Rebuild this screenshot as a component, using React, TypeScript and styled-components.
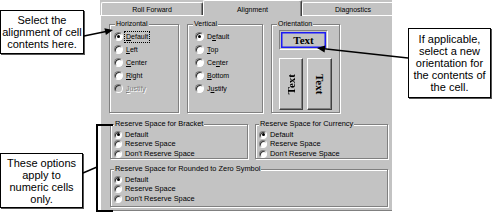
import React, { ReactNode } from 'react';
import styled, { createGlobalStyle } from 'styled-components';

const GlobalStyle = createGlobalStyle`
  html, body {
    margin: 0;
    padding: 0;
    background: #fff;
  }
  body {
    font-family: "Liberation Sans", Arial, sans-serif;
  }
`;

const FACE = '#c3c3c3';

interface I_Option {
    label: ReactNode
    checked?: boolean
    disabled?: boolean
    focus?: boolean
}

const horizontal: I_Option[] = [
    { label: <><u>D</u>efault</>, checked: true, focus: true },
    { label: <><u>L</u>eft</> },
    { label: <><u>C</u>enter</> },
    { label: <><u>R</u>ight</> },
    { label: <><u>J</u>ustify</>, disabled: true },
];

const vertical: I_Option[] = [
    { label: <>D<u>e</u>fault</>, checked: true },
    { label: <><u>T</u>op</> },
    { label: <>Ce<u>n</u>ter</> },
    { label: <><u>B</u>ottom</> },
    { label: <>J<u>u</u>stify</> },
];

const reserve: I_Option[] = [
    { label: 'Default', checked: true },
    { label: 'Reserve Space' },
    { label: 'Don\'t Reserve Space' },
];

const RadioRow = (props: I_Option & { small?: boolean }) => (
    <Option $row={props.small ? 9.5 : 13}>
        <RadioDot $checked={props.checked} $disabled={props.disabled} $size={props.small ? 8 : 9} />
        <OptionText $disabled={props.disabled} $focus={props.focus} $fs={props.small ? 7.4 : 7}>
            {props.label}
        </OptionText>
    </Option>
);

const App: React.FC = () => {
    return (
        <>
            <GlobalStyle />
            <Canvas>
                <Dialog>
                    <TabStrip>
                        <Tab $w={102}>Roll Forward</Tab>
                        <Tab $w={99} $active>Alignment</Tab>
                        <Tab $w={102}>Diagnostics</Tab>
                    </TabStrip>
                    <Body>
                        <TopRow>
                            <Group $w={70} $h={94}>
                                <Legend>Horizontal</Legend>
                                <OptionList $pad={4}>
                                    {horizontal.map((o, i) => <RadioRow key={i} {...o} />)}
                                </OptionList>
                            </Group>
                            <Group $w={76} $h={94}>
                                <Legend>Vertical</Legend>
                                <OptionList $pad={7}>
                                    {vertical.map((o, i) => <RadioRow key={i} {...o} />)}
                                </OptionList>
                            </Group>
                            <Group $w={69} $h={94}>
                                <Legend>Orientation</Legend>
                                <OrientArea>
                                    <OrientButton $w={49} $h={20} $selected>
                                        <HorizText>Text</HorizText>
                                    </OrientButton>
                                    <OrientRow>
                                        <OrientButton $w={24} $h={52}>
                                            <VertText $dir="up">Text</VertText>
                                        </OrientButton>
                                        <OrientButton $w={25} $h={52}>
                                            <VertText $dir="down">Text</VertText>
                                        </OrientButton>
                                    </OrientRow>
                                </OrientArea>
                            </Group>
                        </TopRow>
                        <LowerRow $top={6}>
                            <Group $w={138} $h={40}>
                                <SmallLegend>Reserve Space for Bracket</SmallLegend>
                                <OptionList $pad={3}>
                                    {reserve.map((o, i) => <RadioRow key={i} {...o} small />)}
                                </OptionList>
                            </Group>
                            <Group $w={133} $h={40}>
                                <SmallLegend>Reserve Space for Currency</SmallLegend>
                                <OptionList $pad={3}>
                                    {reserve.map((o, i) => <RadioRow key={i} {...o} small />)}
                                </OptionList>
                            </Group>
                        </LowerRow>
                        <LowerRow $top={5}>
                            <Group $w={278} $h={43}>
                                <SmallLegend>Reserve Space for Rounded to Zero Symbol</SmallLegend>
                                <OptionList $pad={3}>
                                    {reserve.map((o, i) => <RadioRow key={i} {...o} small />)}
                                </OptionList>
                            </Group>
                        </LowerRow>
                    </Body>
                </Dialog>

                <Callout $x={0} $y={10} $w={84} $h={44}>
                    Select the<br />alignment of cell<br />contents here.
                </Callout>
                <Callout $x={408} $y={28} $w={83} $h={70}>
                    If applicable,<br />select a new<br />orientation for<br />the contents of<br />the cell.
                </Callout>
                <Callout $x={0} $y={153} $w={83} $h={55}>
                    These options<br />apply to<br />numeric cells<br />only.
                </Callout>

                <Pointers width="493" height="217" viewBox="0 0 493 217">
                    <line x1="84" y1="36" x2="106" y2="31.5" stroke="#000" strokeWidth="1.6" />
                    <polygon points="113,30 105.9,35.1 104.4,28.2" fill="#000" />
                    <line x1="408" y1="58" x2="324" y2="48.8" stroke="#000" strokeWidth="1.6" />
                    <polygon points="317,48 325.3,45.4 324.6,52.4" fill="#000" />
                    <polyline points="113,125 97,125 97,211 113,211" fill="none" stroke="#000" strokeWidth="2" />
                    <line x1="83" y1="173" x2="97" y2="167" stroke="#000" strokeWidth="1.4" />
                </Pointers>
            </Canvas>
        </>
    );
};

export default App;

const Canvas = styled.div`
    position: relative;
    width: 493px;
    height: 217px;
    overflow: hidden;
    display: flex;
    align-items: flex-start;
`;

const Dialog = styled.div`
    margin-left: 100px;
    width: 292px;
    height: 211px;
    overflow: hidden;
    background: ${FACE};
    display: flex;
    flex-direction: column;
    font-family: "Liberation Sans", Arial, sans-serif;
    color: #000;
`;

const TabStrip = styled.div`
    display: flex;
    align-items: flex-end;
    height: 15px;
    flex-shrink: 0;
    padding-left: 1px;
    position: relative;
    z-index: 1;
`;

const Tab = styled.div<{ $w: number, $active?: boolean }>`
    flex-shrink: 0;
    width: ${p => p.$w}px;
    height: ${p => p.$active ? 16 : 13}px;
    margin-bottom: ${p => p.$active ? -1 : 0}px;
    box-sizing: border-box;
    border-top: 1px solid #fff;
    border-left: 1px solid #fff;
    border-right: 1px solid #404040;
    box-shadow: inset -1px 0 0 #808080;
    border-radius: 2px 2px 0 0;
    background: ${FACE};
    display: flex;
    align-items: center;
    justify-content: center;
    padding-top: ${p => p.$active ? 1 : 0}px;
    font-size: 7px;
    line-height: 9px;
`;

const Body = styled.div`
    flex: 1;
    border-top: 1px solid #fff;
    border-left: 1px solid #fff;
    border-bottom: 1px solid #808080;
    padding: 3px 0 0 8px;
    display: flex;
    flex-direction: column;
`;

const TopRow = styled.div`
    display: flex;
    gap: 8px;
`;

const LowerRow = styled.div<{ $top: number }>`
    display: flex;
    gap: 7px;
    margin: ${p => p.$top}px 0 0 1px;
`;

const Group = styled.fieldset<{ $w: number, $h: number }>`
    margin: 0;
    padding: 0;
    min-width: 0;
    width: ${p => p.$w}px;
    height: ${p => p.$h}px;
    box-sizing: border-box;
    border: 1px solid #808080;
    box-shadow: inset 1px 1px 0 #fff, 1px 1px 0 #fff;
    flex-shrink: 0;
`;

const Legend = styled.legend`
    margin-left: 5px;
    padding: 0 1px;
    font-size: 7px;
    line-height: 10px;
    background: ${FACE};
`;

const SmallLegend = styled(Legend)`
    margin-left: 3px;
    font-size: 7.4px;
`;

const OptionList = styled.div<{ $pad: number }>`
    display: flex;
    flex-direction: column;
    padding-left: ${p => p.$pad}px;
    padding-top: 1px;
`;

const Option = styled.div<{ $row: number }>`
    display: flex;
    align-items: center;
    gap: 2px;
    height: ${p => p.$row}px;
`;

const RadioDot = styled.span<{ $checked?: boolean, $disabled?: boolean, $size: number }>`
    flex-shrink: 0;
    width: ${p => p.$size}px;
    height: ${p => p.$size}px;
    box-sizing: border-box;
    border-radius: 50%;
    border: 1px solid;
    border-color: #808080 #fff #fff #808080;
    box-shadow: inset 1px 1px 0 #303030;
    background: ${p => p.$disabled ? FACE : '#fff'};
    display: inline-flex;
    align-items: center;
    justify-content: center;
    &::after {
        content: '';
        display: ${p => p.$checked ? 'block' : 'none'};
        width: 3px;
        height: 3px;
        border-radius: 50%;
        background: #000;
    }
`;

const OptionText = styled.span<{ $disabled?: boolean, $focus?: boolean, $fs: number }>`
    font-size: ${p => p.$fs}px;
    line-height: ${p => Math.round(p.$fs + 3)}px;
    padding: 0 1px;
    color: ${p => p.$disabled ? '#808080' : '#000'};
    text-shadow: ${p => p.$disabled ? '1px 1px 0 #fff' : 'none'};
    outline: ${p => p.$focus ? '1px dotted #000' : 'none'};
    white-space: nowrap;
`;

const OrientArea = styled.div`
    display: flex;
    flex-direction: column;
    gap: 8px;
    padding: 1px 0 0 7px;
`;

const OrientRow = styled.div`
    display: flex;
    gap: 4px;
`;

const OrientButton = styled.div<{ $w: number, $h: number, $selected?: boolean }>`
    width: ${p => p.$w}px;
    height: ${p => p.$h}px;
    box-sizing: border-box;
    border: 1px solid;
    border-color: ${p => p.$selected ? '#808080 #fff #fff #808080' : '#fff #404040 #404040 #fff'};
    box-shadow: ${p => p.$selected ? 'inset 0 0 0 1px #c3c3c3, inset 0 0 0 2.5px #1c1cf5' : 'inset -1px -1px 0 #808080'};
    display: flex;
    align-items: center;
    justify-content: center;
    font-family: "Liberation Serif", "Times New Roman", serif;
    font-weight: bold;
    font-size: 11px;
`;

const HorizText = styled.span`
    line-height: 12px;
`;

const VertText = styled.span<{ $dir: 'up' | 'down' }>`
    writing-mode: vertical-rl;
    transform: ${p => p.$dir === 'up' ? 'rotate(180deg)' : 'none'};
    line-height: 12px;
`;

const Callout = styled.div<{ $x: number, $y: number, $w: number, $h: number }>`
    position: absolute;
    left: ${p => p.$x}px;
    top: ${p => p.$y}px;
    width: ${p => p.$w}px;
    height: ${p => p.$h}px;
    box-sizing: border-box;
    border: 1px solid #000;
    box-shadow: 1px 1px 0 #555;
    background: #fff;
    display: flex;
    align-items: center;
    justify-content: center;
    text-align: center;
    font-family: "Liberation Sans", Arial, sans-serif;
    font-size: 11px;
    line-height: 12px;
    color: #000;
`;

const Pointers = styled.svg`
    position: absolute;
    left: 0;
    top: 0;
    pointer-events: none;
`;
